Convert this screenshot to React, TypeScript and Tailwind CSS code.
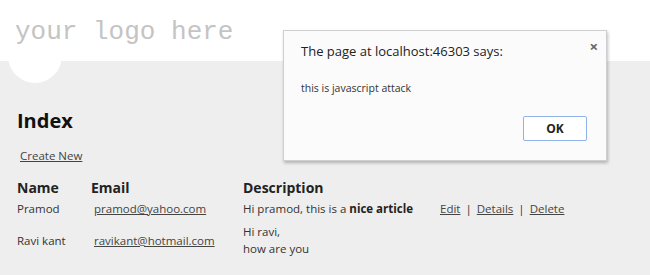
import React from 'react';

const rows = [
  { name: 'Pramod', email: 'pramod@yahoo.com', desc: <>Hi pramod, this is a <b className="font-bold text-[#222]">nice article</b></>, actions: true },
  { name: 'Ravi kant', email: 'ravikant@hotmail.com', desc: <>Hi ravi,<br />how are you</>, actions: false },
];

function AlertDialog() {
  return (
    <div className="absolute left-[283px] top-[30px] w-[324px] h-[131px] bg-[#fbfbfb] border border-[#cfcfcf] shadow-[1px_2px_3px_rgba(0,0,0,0.25)] font-['Open_Sans',sans-serif] text-[#222]">
      <div className="flex items-start justify-between pl-[17px] pr-[8px] pt-[8px]">
        <span className="text-[13px] leading-[24px]">The page at localhost:46303 says:</span>
        <span className="text-[15px] leading-[14px] text-[#666] font-bold">×</span>
      </div>
      <p className="pl-[17px] mt-[17px] text-[10.5px] leading-[16px] text-[#333]">this is javascript attack</p>
      <div className="flex justify-end pr-[19px] mt-[20px]">
        <button className="w-[64px] h-[25px] bg-white border border-[#8fb3e8] rounded-[2px] text-[12px] font-bold text-[#222]">OK</button>
      </div>
    </div>
  );
}

export default function App() {
  return (
    <div className="relative w-[650px] h-[275px] overflow-hidden bg-[#eeeeee] font-['Open_Sans',sans-serif] text-[#333]">
      <header className="relative h-[61px] bg-white">
        <div className="absolute left-[8px] top-[29px] w-[54px] h-[54px] rounded-full bg-white" />
        <div className="relative pl-[15px] pt-[14px] font-['Liberation_Mono',monospace] text-[26px] leading-[36px] text-[#c4c4c4]">your logo here</div>
      </header>

      <main className="px-[17px] pt-[47px]">
        <h2 className="text-[20px] leading-[26px] font-bold text-[#111]">Index</h2>
        <a href="#" className="inline-block ml-[3px] mt-[13px] text-[11.5px] leading-[18px] underline text-[#444]">Create New</a>

        <table className="mt-[12px] border-collapse text-[11.5px]">
          <thead>
            <tr className="text-left text-[14px] font-bold text-[#222]">
              <th className="w-[74px] p-0 leading-[20px] font-bold">Name</th>
              <th className="w-[152px] p-0 leading-[20px] font-bold">Email</th>
              <th className="w-[197px] p-0 leading-[20px] font-bold">Description</th>
              <th className="p-0"></th>
            </tr>
          </thead>
          <tbody>
            {rows.map(r => (
              <tr key={r.name} className="align-middle">
                <td className="p-0 pt-[2px] pb-[4px] leading-[17px]">{r.name}</td>
                <td className="p-0 pt-[2px] pb-[4px] leading-[17px]"><a href="#" className="ml-[3px] underline text-[#444]">{r.email}</a></td>
                <td className="p-0 pt-[2px] pb-[4px] leading-[17px]">{r.desc}</td>
                <td className="p-0 pt-[2px] pb-[4px] leading-[17px]">
                  {r.actions && (
                    <span className="flex gap-[5px]">
                      <a href="#" className="underline text-[#444]">Edit</a>
                      <span>|</span>
                      <a href="#" className="underline text-[#444]">Details</a>
                      <span className="text-[#800060]">|</span>
                      <a href="#" className="underline text-[#444]">Delete</a>
                    </span>
                  )}
                </td>
              </tr>
            ))}
          </tbody>
        </table>
      </main>

      <AlertDialog />
    </div>
  );
}
